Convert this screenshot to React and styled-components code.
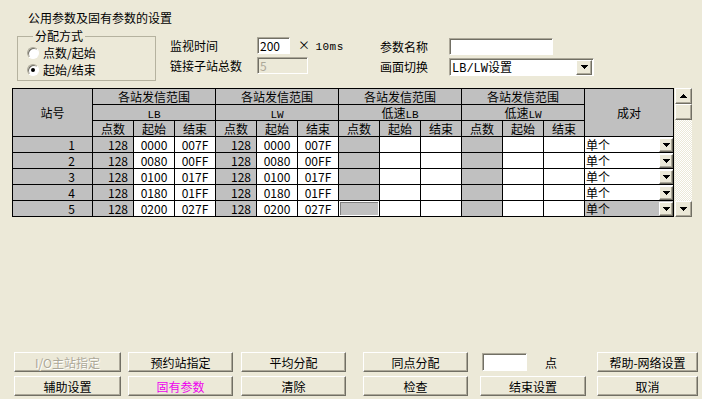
import React from 'react';
import styled, { createGlobalStyle } from 'styled-components';

const FONT = `"Noto Sans CJK SC", "Noto Sans", sans-serif`;
const MONO = `"Liberation Mono", "Noto Sans CJK SC", monospace`;

const Global = createGlobalStyle`
  html, body { margin: 0; padding: 0; background: #ECE9D8; }
  body { font-family: ${FONT}; font-size: 12px; color: #000; }
  * { box-sizing: border-box; }
`;

const Dialog = styled.div`
  width: 702px;
  height: 399px;
  display: flex;
  flex-direction: column;
  overflow: hidden;
  padding: 11px 0 3px 0;
  background: #ECE9D8;
`;

const Title = styled.div`
  margin-left: 28px;
  height: 14px;
  line-height: 14px;
`;

const TopRow = styled.div`
  display: flex;
  margin-top: 4px;
  height: 52px;
`;

const Group = styled.fieldset`
  margin: 0 0 0 17px;
  padding: 1px 0 0 9px;
  width: 139px;
  height: 52px;
  border: 1px solid #B5B29F;
  min-width: 0;
`;

const Legend = styled.legend`
  padding: 0 2px;
  margin-left: 6px;
  line-height: 14px;
  font-size: 12px;
`;

const RadioRow = styled.label`
  display: flex;
  align-items: center;
  height: 17px;
  gap: 4px;
`;

const RadioDot = styled.span`
  width: 12px;
  height: 12px;
  border-radius: 50%;
  background: #fff;
  border: 1px solid;
  border-color: #ACA899 #fff #fff #ACA899;
  box-shadow: inset 1px 1px 0 #716F64;
  display: flex;
  align-items: center;
  justify-content: center;
  &::after {
    content: '';
    width: 4px;
    height: 4px;
    border-radius: 50%;
    background: ${p => (p.$on ? '#000' : 'transparent')};
  }
`;

const Fields = styled.div`
  display: grid;
  grid-template-columns: ${p => p.$label}px auto;
  grid-auto-rows: ${p => p.$rh}px;
  row-gap: 3px;
  align-items: center;
  align-content: start;
  margin-left: ${p => p.$ml}px;
  padding-top: ${p => p.$pt}px;
  width: ${p => p.$w || 'auto'};
`;

const FieldLine = styled.div`
  display: flex;
  align-items: center;
  height: 100%;
`;

const Input = styled.div`
  width: ${p => p.$w}px;
  height: ${p => p.$h || 17}px;
  border: 1px solid;
  border-color: #ACA899 #fff #fff #ACA899;
  box-shadow: inset 1px 1px 0 #716F64;
  background: ${p => (p.$disabled ? '#ECE9D8' : '#fff')};
  color: ${p => (p.$disabled ? '#ACA899' : '#000')};
  font-size: 12px;
  line-height: 14px;
  padding: 1px ${p => p.$pr || 0}px 0 2px;
  display: flex;
  align-items: center;
  justify-content: space-between;
  overflow: hidden;
`;

const Unit = styled.span`
  margin-left: 8px;
  color: #000;
  line-height: 14px;
  white-space: pre;
`;

const Text = styled.span`
  line-height: 15px;
  white-space: nowrap;
`;

const MonoText = styled.span`
  font-family: ${MONO};
  font-size: ${p => p.$size || 12}px;
  letter-spacing: ${p => p.$ls || 0}px;
  line-height: 1;
`;

const DropBtn = styled.span`
  width: ${p => p.$w}px;
  height: ${p => p.$h}px;
  background: #ECE9D8;
  border: 1px solid;
  border-color: #fff #716F64 #716F64 #fff;
  box-shadow: inset -1px -1px 0 #ACA899;
  display: flex;
  align-items: center;
  justify-content: center;
  flex-shrink: 0;
`;

const TableArea = styled.div`
  display: flex;
  margin: 7px 0 0 12px;
`;

const Grid = styled.div`
  display: grid;
  grid-template-columns: 79px repeat(12, 40px) 88px;
  grid-auto-rows: 15px;
  gap: 1px;
  padding: 1px;
  background: #000;
`;

const Cell = styled.div`
  display: flex;
  align-items: center;
  justify-content: ${p =>
    p.$align === 'right' ? 'flex-end' : p.$align === 'left' ? 'flex-start' : 'center'};
  padding: 0 ${p => p.$pr || 0}px 0 ${p => p.$pl || 0}px;
  background: ${p => (p.$white ? '#fff' : '#C0C0C0')};
  line-height: 15px;
  white-space: nowrap;
  grid-row: ${p => (p.$rs ? `span ${p.$rs}` : 'auto')};
  grid-column: ${p => (p.$cs ? `span ${p.$cs}` : 'auto')};
  box-shadow: ${p =>
    p.$focus ? 'inset 1px 1px 0 #fff, inset -1px -1px 0 #fff, inset 2px 2px 0 #808080' : 'none'};
`;

const PairCell = styled(Cell)`
  justify-content: space-between;
  padding-left: 1px;
`;

const Scrollbar = styled.div`
  width: 17px;
  margin-left: 1px;
  display: flex;
  flex-direction: column;
`;

const ScrollBtn = styled.div`
  height: 16px;
  background: #ECE9D8;
  border: 1px solid;
  border-color: #fff #716F64 #716F64 #fff;
  box-shadow: inset -1px -1px 0 #ACA899;
  display: flex;
  align-items: center;
  justify-content: center;
`;

const Track = styled.div`
  flex: 1;
  background: repeating-conic-gradient(#fff 0 25%, #ECE9D8 0 50%) 0 0 / 2px 2px;
`;

const Buttons = styled.div`
  margin-top: auto;
  padding-left: 14px;
  display: grid;
  grid-template-columns: 114px 113px 122px 117px 117px 100px;
  grid-auto-rows: 20px;
  row-gap: 4px;
`;

const Btn = styled.div`
  width: ${p => p.$w}px;
  height: 20px;
  background: #ECE9D8;
  border: 1px solid;
  border-color: #fff #716F64 #716F64 #fff;
  box-shadow: inset -1px -1px 0 #ACA899;
  display: flex;
  align-items: center;
  justify-content: center;
  font-size: 12px;
  color: ${p => (p.$disabled ? '#ACA899' : p.$accent ? '#EE00EE' : '#000')};
  text-shadow: ${p => (p.$disabled ? '1px 1px 0 #fff' : 'none')};
`;

const PointBox = styled.div`
  display: flex;
  align-items: center;
  gap: 18px;
  padding-left: 2px;
`;

const Arrow = ({ up }) => (
  <svg width="7" height="4" viewBox="0 0 7 4" shapeRendering="crispEdges" style={{ display: 'block' }}>
    <path
      d="M0 0H7V1H6V2H5V3H4V4H3V3H2V2H1V1H0Z"
      fill="#000"
      transform={up ? 'translate(0 4) scale(1 -1)' : undefined}
    />
  </svg>
);

const rows = [
  ['1', '0000', '007F'],
  ['2', '0080', '00FF'],
  ['3', '0100', '017F'],
  ['4', '0180', '01FF'],
  ['5', '0200', '027F'],
];

const groups = [
  { name: 'LB', low: false },
  { name: 'LW', low: false },
  { name: 'LB', low: true },
  { name: 'LW', low: true },
];

export default function App() {
  return (
    <>
      <Global />
      <Dialog>
        <Title>公用参数及固有参数的设置</Title>
        <TopRow>
          <Group>
            <Legend>分配方式</Legend>
            <RadioRow>
              <RadioDot />
              <span>点数/起始</span>
            </RadioRow>
            <RadioRow>
              <RadioDot $on />
              <span>起始/结束</span>
            </RadioRow>
          </Group>
          <Fields $label={87} $rh={17} $ml={14} $pt={8} $w="210px">
            <span>监视时间</span>
            <FieldLine>
              <Input $w={33}>200</Input>
              <Unit>
                {'×  '}
                <MonoText $size={11} $ls={0.5}>10ms</MonoText>
              </Unit>
            </FieldLine>
            <span>链接子站总数</span>
            <FieldLine>
              <Input $w={51} $disabled>5</Input>
            </FieldLine>
          </Fields>
          <Fields $label={69} $rh={17} $ml={0} $pt={9}>
            <span>参数名称</span>
            <FieldLine>
              <Input $w={104} />
            </FieldLine>
            <span>画面切换</span>
            <FieldLine>
              <Input $w={145} $h={18} $pr={1}>
                <Text>
                  <MonoText $size={12}>LB/LW</MonoText>设置
                </Text>
                <DropBtn $w={16} $h={15}>
                  <Arrow />
                </DropBtn>
              </Input>
            </FieldLine>
          </Fields>
        </TopRow>

        <TableArea>
          <Grid>
            <Cell $rs={3}>站号</Cell>
            {groups.map((g, i) => (
              <Cell key={`h1-${i}`} $cs={3}>各站发信范围</Cell>
            ))}
            <Cell $rs={3}>成对</Cell>
            {groups.map((g, i) => (
              <Cell key={`h2-${i}`} $cs={3}>
                <Text>
                  {g.low ? '低速' : ''}
                  <MonoText $size={11}>{g.name}</MonoText>
                </Text>
              </Cell>
            ))}
            {groups.map((g, i) => (
              <React.Fragment key={`h3-${i}`}>
                <Cell>点数</Cell>
                <Cell>起始</Cell>
                <Cell>结束</Cell>
              </React.Fragment>
            ))}
            {rows.map((r, ri) => (
              <React.Fragment key={`r-${ri}`}>
                <Cell $align="right" $pr={17}>{r[0]}</Cell>
                <Cell $align="right" $pr={5}>128</Cell>
                <Cell $white>{r[1]}</Cell>
                <Cell $white>{r[2]}</Cell>
                <Cell $align="right" $pr={5}>128</Cell>
                <Cell $white>{r[1]}</Cell>
                <Cell $white>{r[2]}</Cell>
                <Cell $focus={ri === 4} />
                <Cell $white />
                <Cell $white />
                <Cell />
                <Cell $white />
                <Cell $white />
                <PairCell $white={ri !== 4}>
                  <span>单个</span>
                  <DropBtn $w={14} $h={14}>
                    <Arrow />
                  </DropBtn>
                </PairCell>
              </React.Fragment>
            ))}
          </Grid>
          <Scrollbar>
            <ScrollBtn>
              <Arrow up />
            </ScrollBtn>
            <ScrollBtn />
            <Track />
            <ScrollBtn>
              <Arrow />
            </ScrollBtn>
          </Scrollbar>
        </TableArea>

        <Buttons>
          <Btn $w={107} $disabled>I/O主站指定</Btn>
          <Btn $w={105}>预约站指定</Btn>
          <Btn $w={105}>平均分配</Btn>
          <Btn $w={105}>同点分配</Btn>
          <PointBox>
            <Input $w={45} $h={18} />
            <span>点</span>
          </PointBox>
          <Btn $w={101}>帮助-网络设置</Btn>
          <Btn $w={107}>辅助设置</Btn>
          <Btn $w={105} $accent>固有参数</Btn>
          <Btn $w={105}>清除</Btn>
          <Btn $w={105}>检查</Btn>
          <Btn $w={106}>结束设置</Btn>
          <Btn $w={101}>取消</Btn>
        </Buttons>
      </Dialog>
    </>
  );
}
